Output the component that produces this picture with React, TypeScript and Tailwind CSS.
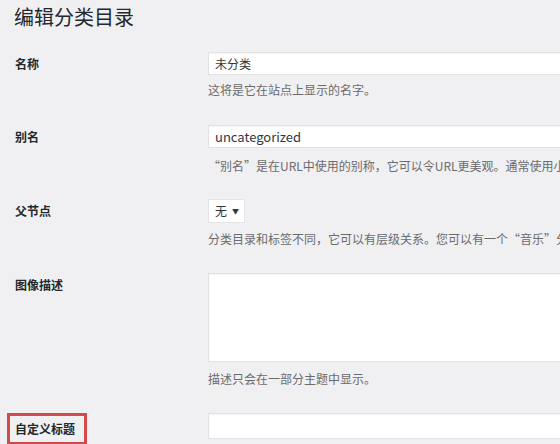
const cjk = '"Noto Sans CJK SC", "Noto Sans", sans-serif'

function Label({ children, boxed }: { children: React.ReactNode; boxed?: boolean }) {
  return (
    <div className="w-[208px] shrink-0 pl-[15px]">
      {boxed ? (
        <span className="-ml-[8px] inline-block border-[3px] border-[#d24a4a] pl-[5px] pr-[9px] py-[1px] text-[12px] font-bold leading-[24px] text-[#23282d]">
          {children}
        </span>
      ) : (
        <span className="block text-[12px] font-bold leading-[24px] text-[#23282d]">{children}</span>
      )}
    </div>
  )
}

function Help({ children, className = "" }: { children: React.ReactNode; className?: string }) {
  return (
    <p className={`whitespace-nowrap text-[12px] leading-[16px] text-[#6b6b6e] ${className}`}>{children}</p>
  )
}

function TextInput({ value, className = "" }: { value?: string; className?: string }) {
  return (
    <div
      className={`flex h-[23px] w-[420px] items-center border border-[#e2e2e4] bg-white px-[6px] text-[12px] text-[#32373c] shadow-[inset_0_1px_2px_rgba(0,0,0,0.05)] ${className}`}
    >
      {value}
    </div>
  )
}

export default function App() {
  return (
    <div className="h-[444px] w-[560px] overflow-hidden bg-[#f0f0f2]" style={{ fontFamily: cjk }}>
      {/* Heading */}
      <h1 className="pl-[14px] pt-[1px] text-[20px] font-normal leading-[32px] text-[#23282d]">编辑分类目录</h1>

      {/* 名称 */}
      <div className="mt-[19px] flex">
        <Label>名称</Label>
        <div className="min-w-0 flex-1">
          <TextInput value="未分类" />
          <Help className="mt-[7px]">这将是它在站点上显示的名字。</Help>
        </div>
      </div>

      {/* 别名 */}
      <div className="mt-[27px] flex">
        <Label>别名</Label>
        <div className="min-w-0 flex-1">
          <TextInput value="uncategorized" className="text-[13px]" />
          <Help className="mt-[10px]">
            “别名”是在URL中使用的别称，它可以令URL更美观。通常使用小写，只能包含字母，数字和连字符（-）。
          </Help>
        </div>
      </div>

      {/* 父节点 */}
      <div className="mt-[25px] flex">
        <Label>父节点</Label>
        <div className="min-w-0 flex-1">
          <div className="flex h-[24px] w-[37px] items-center gap-[5px] border border-[#e4e4e6] bg-white pl-[6px] text-[12px] text-[#32373c]">
            <span>无</span>
            <span className="text-[7px] leading-none">▼</span>
          </div>
          <Help className="mt-[8px]">
            分类目录和标签不同，它可以有层级关系。您可以有一个“音乐”分类目录，在这个目录下可以有叫做“流行”和“古典”的子目录。
          </Help>
        </div>
      </div>

      {/* 图像描述 */}
      <div className="mt-[26px] flex">
        <Label>图像描述</Label>
        <div className="min-w-0 flex-1">
          <div className="h-[89px] w-[420px] border border-[#e2e2e4] bg-white shadow-[inset_0_1px_2px_rgba(0,0,0,0.05)]" />
          <Help className="mt-[9px]">描述只会在一部分主题中显示。</Help>
        </div>
      </div>

      {/* 自定义标题 */}
      <div className="mt-[26px] flex">
        <Label boxed>自定义标题</Label>
        <div className="min-w-0 flex-1">
          <TextInput className="h-[26px]" />
        </div>
      </div>
    </div>
  )
}
